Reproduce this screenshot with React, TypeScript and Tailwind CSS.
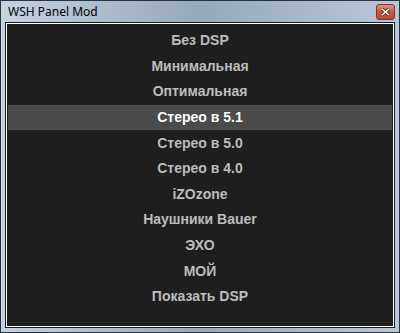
const items = [
  "Без DSP",
  "Минимальная",
  "Оптимальная",
  "Стерео в 5.1",
  "Стерео в 5.0",
  "Стерео в 4.0",
  "iZOzone",
  "Наушники Bauer",
  "ЭХО",
  "МОЙ",
  "Показать DSP",
];

const active = 3;

export default function App() {
  return (
    <div className="w-[400px] h-[333px] bg-[#2a3440] p-px">
      {/* window frame */}
      <div className="h-full flex flex-col bg-gradient-to-r from-[#c5d2df] via-[#97a8bb] to-[#b8c8d8]">
        {/* title bar */}
        <div className="h-[21px] flex items-center justify-between pl-[7px] pr-[4px] shrink-0">
          <span className="text-[12px] text-black font-['Noto_Sans',sans-serif] leading-none">
            WSH Panel Mod
          </span>
          <div className="w-[19px] h-[16px] mt-[1px] rounded-[3px] border border-[#6e3a33] bg-gradient-to-b from-[#e0907f] via-[#cc5540] to-[#c24a33] flex items-center justify-center">
            <svg width="9" height="8" viewBox="0 0 9 8">
              <path d="M1 1 L8 7 M8 1 L1 7" stroke="#3a2a2a" strokeWidth="3" />
              <path d="M1 1 L8 7 M8 1 L1 7" stroke="#ffffff" strokeWidth="1.6" />
            </svg>
          </div>
        </div>
        {/* client area */}
        <div className="flex-1 mx-[4px] mb-[4px] bg-[#1a1a1a] p-px">
          <div className="h-full border border-white bg-[#1a1a1a] p-px">
            <div className="h-full bg-[#1e1e1e] pt-[3px] flex flex-col">
              {items.map((t, i) => (
                <div
                  key={t}
                  className={
                    i === active
                      ? "h-[25.6px] flex items-center justify-center bg-[#4b4b4b] text-white text-[14px] font-bold font-['Liberation_Sans',Arial,sans-serif]"
                      : "h-[25.6px] flex items-center justify-center text-[#bdbdbd] text-[14px] font-bold font-['Liberation_Sans',Arial,sans-serif]"
                  }
                >
                  {t}
                </div>
              ))}
            </div>
          </div>
        </div>
      </div>
    </div>
  );
}
